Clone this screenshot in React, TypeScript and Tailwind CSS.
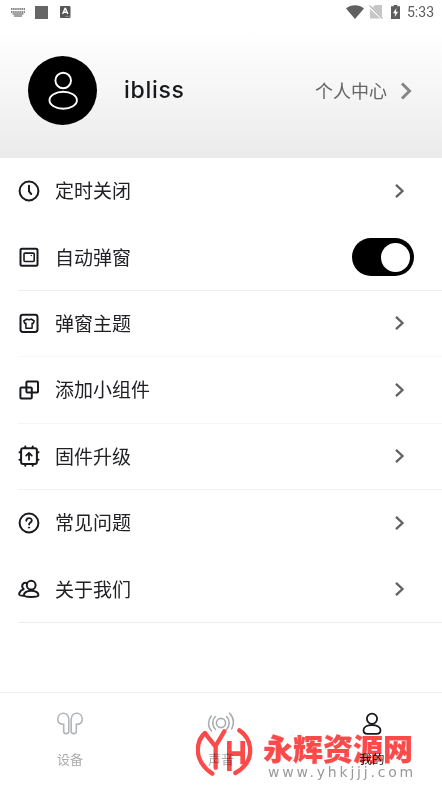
import type { ReactNode } from "react";

const cjk = "font-['Roboto','Noto_Sans_CJK_SC',sans-serif]";

function Chevron({ big = false }: { big?: boolean }) {
  return big ? (
    <svg width="12" height="18" viewBox="0 0 12 18" fill="none" stroke="#858687" strokeWidth="3">
      <path d="M2 1.5 9.5 9 2 16.5" />
    </svg>
  ) : (
    <svg width="10" height="14" viewBox="0 0 10 14" fill="none" stroke="#626263" strokeWidth="2.3">
      <path d="M1 .8 7.5 7 1 13.2" />
    </svg>
  );
}

function Icon({ children }: { children: ReactNode }) {
  return (
    <svg width="22" height="22" viewBox="0 0 22 22" fill="none" stroke="#17191c" strokeWidth="2" strokeLinecap="round" strokeLinejoin="round" className="shrink-0">
      {children}
    </svg>
  );
}

const rows: { label: string; icon: ReactNode; toggle?: boolean; line: string }[] = [
  {
    label: "定时关闭",
    line: "border-transparent",
    icon: (
      <>
        <circle cx="11" cy="11" r="9.4" />
        <path d="M11 5.8V11.4L13.2 14" />
      </>
    ),
  },
  {
    label: "自动弹窗",
    line: "border-[#efefef]",
    toggle: true,
    icon: (
      <>
        <rect x="2.5" y="2.8" width="17" height="17" rx="1.5" />
        <rect x="6" y="7.1" width="10.2" height="8.4" rx="1" strokeWidth="1.6" />
        <path d="M13 9.6h.6" strokeWidth="1" />
      </>
    ),
  },
  {
    label: "弹窗主题",
    line: "border-[#f8f8f8]",
    icon: (
      <>
        <rect x="2.5" y="2.8" width="17" height="17.2" rx="2.4" />
        <path d="M8.9 7c.9.9 3.3.9 4.2 0l3.1 2-1 2.5-1.1-.3v5H7.9v-5l-1.1.3-1-2.5z" strokeWidth="1.5" />
      </>
    ),
  },
  {
    label: "添加小组件",
    line: "border-[#f5f5f5]",
    icon: (
      <>
        <rect x="8.4" y="2.4" width="11.6" height="11.2" rx="1" />
        <rect x="2.4" y="8.4" width="11.4" height="11.2" rx="1" />
      </>
    ),
  },
  {
    label: "固件升级",
    line: "border-[#f1f1f1]",
    icon: (
      <>
        <rect x="3.1" y="3.2" width="15.8" height="15.8" rx="2" />
        <path d="M7.3 3V1.5M14.7 3V1.5M7.3 19v1.7M14.7 19v1.7M3 7.3H1.5M3 14.7H1.5M19 7.3h1.5M19 14.7h1.5" />
        <path d="M11 14.8V8M8.2 10.6 11 7.8l2.8 2.8" strokeWidth="1.8" />
      </>
    ),
  },
  {
    label: "常见问题",
    line: "border-transparent",
    icon: (
      <>
        <circle cx="11" cy="11" r="9.4" />
        <path d="M8.3 8.8c0-3.8 5.6-3.5 5.5-.3 0 2-2.7 2-2.7 4.1" strokeWidth="1.8" />
        <circle cx="11" cy="15.6" r=".6" fill="#17191c" strokeWidth="1" />
      </>
    ),
  },
  {
    label: "关于我们",
    line: "border-[#ececec]",
    icon: (
      <>
        <circle cx="13.2" cy="7.2" r="4.4" />
        <path d="M8.6 5c-3.6-1.2-6 3.2-3 6M5 11.6C2 12.4.6 15.8 1.5 17c.4.5 2 .7 3.8.7" />
        <path d="M13.2 12.7c-5 0-7.4 2.4-7.2 4.4.1 1.2 1.6 1.8 7.2 1.8s7.1-.6 7.2-1.8c.2-2-2.2-4.4-7.2-4.4z" />
      </>
    ),
  },
];

function StatusBar() {
  return (
    <div className="flex h-6 items-center justify-between pr-[8px] pl-[11px]">
      <div className="flex items-center">
        <svg width="14" height="9" viewBox="0 0 14 9" className="text-[#858585]">
          <path d="M0 1h14M0 4h14" stroke="currentColor" strokeWidth="2" strokeDasharray="1.5 .6" />
          <path d="M1.5 6h11M3 8h8" stroke="currentColor" strokeWidth="1.3" />
        </svg>
        <div className="ml-[10px] size-[13px] bg-[#666]" />
        <svg width="11" height="12" viewBox="0 0 11 12" className="ml-3">
          <rect width="10.5" height="12" rx="1" fill="#565656" />
          <path d="M2.7 8 5 2.5h.5L7.8 8M3.5 6.3h3.6" stroke="#fff" strokeWidth="1.4" fill="none" />
          <path d="M5.5 10.3h4" stroke="#ddd" strokeWidth=".8" strokeDasharray="1 .7" />
        </svg>
      </div>
      <div className="flex items-center">
        <svg width="18" height="14" viewBox="0 0 18 14">
          <path d="M0 3.4C5-.7 13-.7 18 3.4L9 14z" fill="#616161" />
        </svg>
        <svg width="14" height="14" viewBox="0 0 14 14" className="ml-[5px]">
          <path d="M13 0v12L3.5 2.5 6 0zM1 4v9.5h10.5z" fill="#c6c6c6" />
          <path d="m.5.5 13 13" stroke="#b5b5b5" strokeWidth="1.1" />
        </svg>
        <svg width="9" height="14" viewBox="0 0 9 14" className="ml-[8px]">
          <path d="M2.7 0h3.6v1.3H9V14H0V1.3h2.7z" fill="#5d5d5d" />
          <path d="M5.4 3 2 8.2h2.2L3.7 12l3.4-5.3H4.9z" fill="#fff" />
        </svg>
        <span className="ml-[7px] text-[14px] leading-6 text-[#5c5c5c]">5:33</span>
      </div>
    </div>
  );
}

function Watermark() {
  return (
    <div className="pointer-events-none absolute top-[728px] left-[196px] flex w-[224px] mix-blend-multiply">
      <svg width="57" height="49" viewBox="48 129 171 147" fill="none" stroke="#fb4a4a" strokeWidth="13" strokeLinecap="round" className="shrink-0">
        <path d="M75 144C50 166 47 206 65 234Q77 254 97 266" />
        <path d="M76 146 106 184 133 139M107 184V248" strokeLinejoin="round" />
        <path d="M148 168V258M148 206H188M188 168V238" strokeLinecap="butt" strokeWidth="14" />
        <path d="M178 136C215 160 219 208 197 238Q184 255 166 264" />
      </svg>
      <div className="-mt-[1px] ml-[10px]">
        <div className="h-[38px] font-['Noto_Sans_CJK_SC',sans-serif] text-[30px] leading-[40px] font-black whitespace-nowrap text-[#fb4a4a] [-webkit-text-stroke:0.2px_#fb4a4a]">永辉资源网</div>
        <div className="ml-[5px] font-['DejaVu_Sans',sans-serif] text-[14px] leading-[14px] tracking-[2.8px] whitespace-nowrap text-[#999]">www.yhkjjj.com</div>
      </div>
    </div>
  );
}

export default function App() {
  return (
    <div className={`relative flex h-[787px] w-[442px] flex-col overflow-hidden bg-white ${cjk}`}>
      <header className="h-[158px] shrink-0 bg-linear-to-b from-white from-20% to-[#ebebeb]">
        <StatusBar />
        <div className="mt-[32px] flex h-[69px] items-center pr-[30px] pl-7">
          <div className="flex size-[69px] items-center justify-center rounded-full bg-black">
            <svg width="32" height="40" viewBox="0 0 32 40" fill="none" stroke="#fff" strokeWidth="1.9">
              <circle cx="16.2" cy="9.5" r="7.8" />
              <ellipse cx="16.2" cy="29.3" rx="13.7" ry="8.5" />
            </svg>
          </div>
          <span className="ml-[27px] font-['Inter',sans-serif] text-[23px] font-medium tracking-[0.7px] text-[#17191c]">ibliss</span>
          <span className="mr-[13px] ml-auto pt-[2px] text-[18px] text-[#646464]">个人中心</span>
          <Chevron big />
        </div>
      </header>

      <main className="h-[465px] shrink-0">
        {rows.map((row) => (
          <div key={row.label} className={`ml-[18px] flex h-[66.4px] items-center border-b ${row.line} ${row.toggle ? "pr-[28px]" : "pr-[37px]"}`}>
            <Icon>{row.icon}</Icon>
            <span className="ml-[15px] flex-1 pt-[3px] text-[19px] leading-7 text-[#202124]">{row.label}</span>
            {row.toggle ? (
              <div className="flex h-[38px] w-[62px] items-center justify-end rounded-full bg-black pr-[4px]">
                <div className="size-[29px] rounded-full bg-white" />
              </div>
            ) : (
              <Chevron />
            )}
          </div>
        ))}
      </main>

      <nav className="mt-auto flex h-[95px] justify-between border-t border-[#efefef] px-[40px] pt-[19px] text-[13px] text-[#aaabad]">
        <div className="flex w-[60px] flex-col items-center">
          <svg width="26" height="24" viewBox="0 0 26 24" fill="none" stroke="#b2b5b7" strokeWidth="1.6">
            <path d="M11.8 7.2C11.8-.9.8-.4.8 7.2c0 3.6 2.7 5.2 5.9 5.2v6.8c0 3.2 5.1 3.2 5.1 0zM14.2 7.2c0-8.1 11-7.6 11 0 0 3.6-2.7 5.2-5.9 5.2v6.8c0 3.2-5.1 3.2-5.1 0z" />
          </svg>
          <span className="mt-[14px] leading-5">设备</span>
        </div>
        <div className="flex w-[60px] flex-col items-center">
          <svg width="28" height="24" viewBox="0 0 28 24" fill="none" stroke="#a9acae" strokeWidth="1.6" strokeLinecap="round">
            <circle cx="14" cy="11" r="4.6" />
            <path d="M8.4 4.5C4.8 8 5 14.2 8.5 17.5M19.6 4.5c3.6 3.5 3.4 9.7-.1 13M4.2 4C.7 8.7.5 14.7 4.5 19M22.5 1.2c4.8 4.7 4.8 11 2.2 15.7" />
          </svg>
          <span className="mt-[14px] leading-5">声音</span>
        </div>
        <div className="flex w-[60px] flex-col items-center text-[#202124]">
          <svg width="22" height="24" viewBox="0 0 22 24" fill="none" stroke="#17191c" strokeWidth="1.8">
            <circle cx="11" cy="6.8" r="5.1" />
            <path d="M11 13c-5 0-8.5 2-8.5 5.2 0 2.6 2 3.6 4 3.6h9c2 0 4-1 4-3.6 0-3.2-3.5-5.2-8.5-5.2z" />
          </svg>
          <span className="mt-[14px] text-[12.5px] leading-5">我的</span>
        </div>
      </nav>
      <Watermark />
    </div>
  );
}
